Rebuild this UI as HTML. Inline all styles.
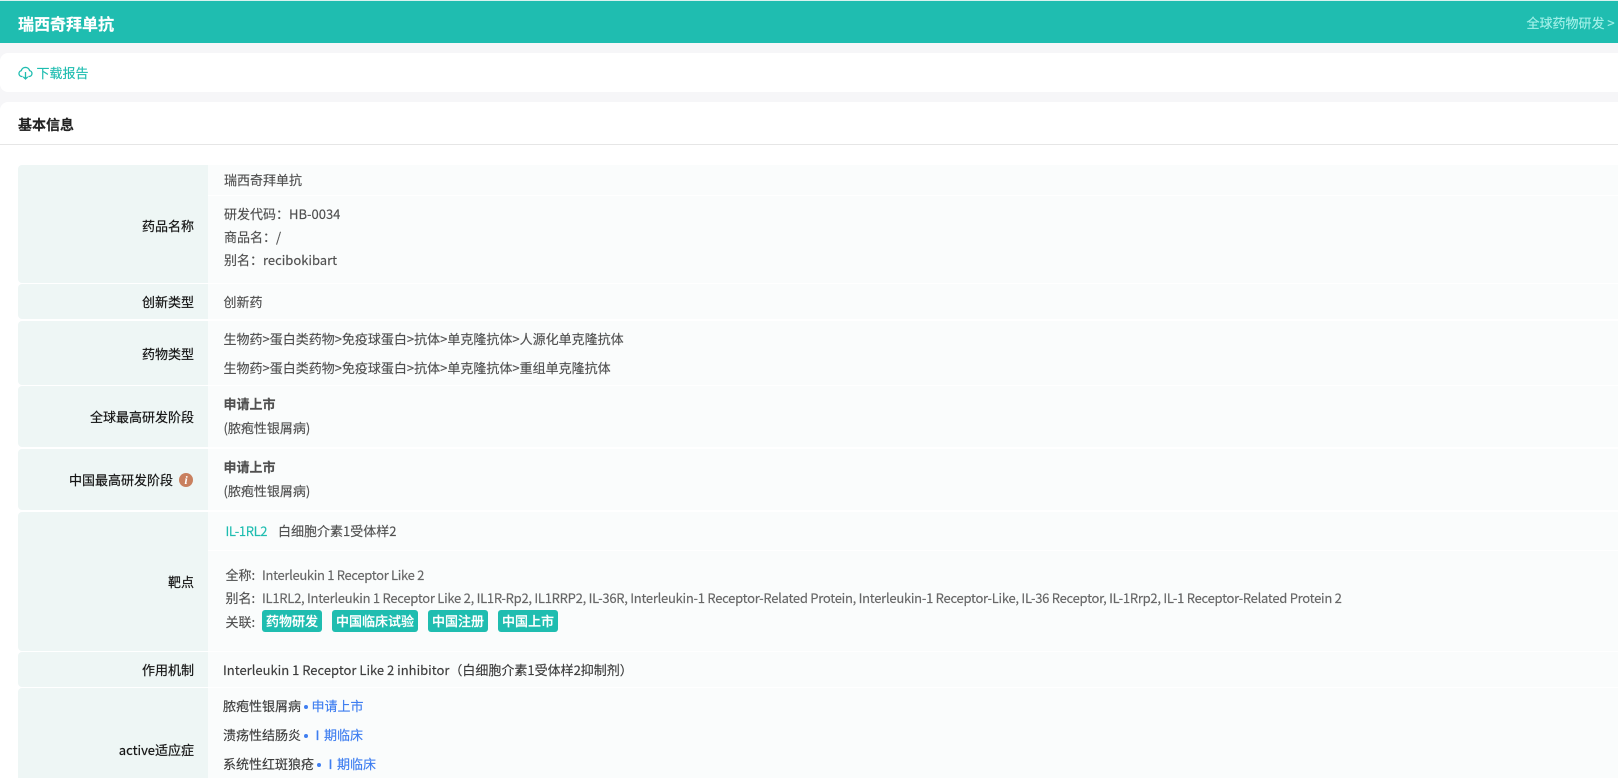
<!DOCTYPE html>
<html lang="zh-CN"><head><meta charset="utf-8"><title>瑞西奇拜单抗</title>
<style>
html,body{margin:0;padding:0;width:1618px;height:778px;overflow:hidden;background:#f6f6f8}
body{position:relative;font-family:"Noto Sans CJK SC","Liberation Sans",sans-serif;font-size:13px;color:#505050}
div{position:absolute;box-sizing:border-box}
.t{line-height:20px;white-space:nowrap;-webkit-text-stroke:.15px currentColor}
.l{left:18px;width:190px;background:#eef6f5;border-radius:4px 0 0 4px}
.v{left:208px;width:1410px;background:#fafcfc}
.lb{right:1424px;color:#151515;line-height:20px;white-space:nowrap;-webkit-text-stroke:.2px currentColor}
.x{left:223.5px}
.tag{top:610px;height:22px;line-height:21px;background:#1fbdb0;color:#fff;border-radius:3px;text-align:center;font-weight:500;font-size:13px;-webkit-text-stroke:.2px #fff}
.b{color:#3f7ef0}
.dot{width:4px;height:4px;border-radius:50%;background:#3f7ef0}
</style></head><body>
<div style="left:0;top:0;width:1618px;height:1px;background:#d9f2ef"></div>
<div style="left:0;top:1px;width:1618px;height:42px;background:#1fbdb0"></div>
<div class="t" style="left:18px;top:13px;color:#fff;font-size:16px;font-weight:700">瑞西奇拜单抗</div>
<div class="t" style="left:1526.5px;top:13px;color:#a2f0e8">全球药物研发 &gt;</div>

<div style="left:0;top:53px;width:1618px;height:39px;background:#fff;border-radius:8px 0 0 8px"></div>
<svg style="position:absolute;left:18px;top:66px" width="15" height="14" viewBox="0 0 15 14" fill="none" stroke="#1fbdb0" stroke-width="1.3"><path d="M4.6 10.5H3.6A3 3 0 0 1 3.3 4.6 4.3 4.3 0 0 1 11.6 4.6 3 3 0 0 1 11.4 10.5H10.4"/><path d="M7.5 6V13M5.2 10.8 7.5 13 9.8 10.8"/></svg>
<div class="t" style="left:36.5px;top:63px;color:#1fbdb0">下载报告</div>

<div style="left:0;top:102px;width:1618px;height:676px;background:#fff;border-radius:8px 0 0 0"></div>
<div style="left:0;top:144px;width:1618px;height:1px;background:#e6e6e6"></div>
<div class="t" style="left:18px;top:115px;color:#222;font-size:14px;font-weight:700">基本信息</div>

<div class="l" style="top:165px;height:118px"></div>
<div class="v" style="top:165px;height:30px"></div>
<div class="v" style="top:196px;height:87px"></div>
<div class="lb" style="top:216px">药品名称</div>
<div class="t" style="left:224px;top:170px">瑞西奇拜单抗</div>
<div class="t" style="left:224px;top:204px">研发代码：HB-0034</div>
<div class="t" style="left:224px;top:227px">商品名：/</div>
<div class="t" style="left:224px;top:250px">别名：recibokibart</div>

<div class="l" style="top:284px;height:35px"></div>
<div class="v" style="top:284px;height:35px"></div>
<div class="lb" style="top:292px">创新类型</div>
<div class="t x" style="top:292px">创新药</div>

<div class="l" style="top:321px;height:64px"></div>
<div class="v" style="top:321px;height:64px"></div>
<div class="lb" style="top:344px">药物类型</div>
<div class="t x" style="top:329px">生物药&gt;蛋白类药物&gt;免疫球蛋白&gt;抗体&gt;单克隆抗体&gt;人源化单克隆抗体</div>
<div class="t x" style="top:358px">生物药&gt;蛋白类药物&gt;免疫球蛋白&gt;抗体&gt;单克隆抗体&gt;重组单克隆抗体</div>

<div class="l" style="top:386px;height:61px"></div>
<div class="v" style="top:386px;height:61px"></div>
<div class="lb" style="top:407px">全球最高研发阶段</div>
<div class="t x" style="top:394px;font-weight:700">申请上市</div>
<div class="t x" style="top:418px">(脓疱性银屑病)</div>

<div class="l" style="top:449px;height:61px"></div>
<div class="v" style="top:449px;height:61px"></div>
<div class="lb" style="top:470px;right:1445px">中国最高研发阶段</div>
<div style="left:179px;top:473px;width:14px;height:14px;border-radius:50%;background:#c9805f;color:#fff;font:italic 700 12px/14px 'Liberation Serif',serif;text-align:center">i</div>
<div class="t x" style="top:457px;font-weight:700">申请上市</div>
<div class="t x" style="top:481px">(脓疱性银屑病)</div>

<div class="l" style="top:512px;height:139px"></div>
<div class="v" style="top:512px;height:38px"></div>
<div class="v" style="top:551px;height:100px"></div>
<div class="lb" style="top:572px">靶点</div>
<div class="t" style="left:225.5px;top:521px;color:#1fbdb0;letter-spacing:-.4px">IL-1RL2</div>
<div class="t" style="left:278px;top:521px">白细胞介素1受体样2</div>
<div class="t" style="left:225.5px;top:565px">全称:</div>
<div class="t" style="left:262px;top:565px;color:#666;letter-spacing:-.32px">Interleukin 1 Receptor Like 2</div>
<div class="t" style="left:225.5px;top:588px">别名:</div>
<div class="t" style="left:262px;top:588px;color:#666;letter-spacing:-.265px">IL1RL2, Interleukin 1 Receptor Like 2, IL1R-Rp2, IL1RRP2, IL-36R, Interleukin-1 Receptor-Related Protein, Interleukin-1 Receptor-Like, IL-36 Receptor, IL-1Rrp2, IL-1 Receptor-Related Protein 2</div>
<div class="t" style="left:225.5px;top:612px">关联:</div>
<div class="tag" style="left:262px;width:60px">药物研发</div>
<div class="tag" style="left:332px;width:86px">中国临床试验</div>
<div class="tag" style="left:428px;width:60px">中国注册</div>
<div class="tag" style="left:498px;width:60px">中国上市</div>

<div class="l" style="top:652px;height:35px"></div>
<div class="v" style="top:652px;height:35px"></div>
<div class="lb" style="top:660px">作用机制</div>
<div class="t" style="left:223px;top:660px;color:#3c3c3c">Interleukin 1 Receptor Like 2 inhibitor（白细胞介素1受体样2抑制剂）</div>

<div class="l" style="top:688px;height:90px;border-radius:4px 0 0 0"></div>
<div class="v" style="top:688px;height:90px"></div>
<div class="lb" style="top:740px">active适应症</div>
<div class="t" style="left:223px;top:696px;color:#3c3c3c">脓疱性银屑病</div>
<div class="dot" style="left:304px;top:705px"></div>
<div class="t b" style="left:311.5px;top:696px">申请上市</div>
<div class="t" style="left:223px;top:725px;color:#3c3c3c">溃疡性结肠炎</div>
<div class="dot" style="left:304px;top:734px"></div>
<div class="t b" style="left:311px;top:725px;-webkit-text-stroke:.3px #3f7ef0">Ⅰ</div>
<div class="t b" style="left:324px;top:725px">期临床</div>
<div class="t" style="left:223px;top:754px;color:#3c3c3c">系统性红斑狼疮</div>
<div class="dot" style="left:317px;top:763px"></div>
<div class="t b" style="left:324px;top:754px;-webkit-text-stroke:.3px #3f7ef0">Ⅰ</div>
<div class="t b" style="left:337px;top:754px">期临床</div>
</body></html>
